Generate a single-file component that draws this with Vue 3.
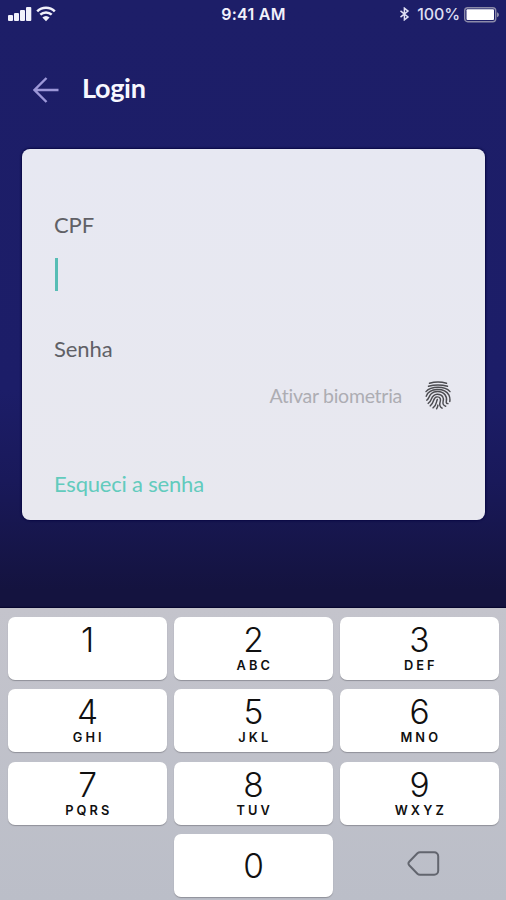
<script setup>
const keys = [
  { digit: '1', letters: '' },
  { digit: '2', letters: 'ABC' },
  { digit: '3', letters: 'DEF' },
  { digit: '4', letters: 'GHI' },
  { digit: '5', letters: 'JKL' },
  { digit: '6', letters: 'MNO' },
  { digit: '7', letters: 'PQRS' },
  { digit: '8', letters: 'TUV' },
  { digit: '9', letters: 'WXYZ' },
]
</script>

<template>
  <div class="screen">
    <header class="status">
      <div class="status-left">
        <svg class="signal" width="24" height="16" viewBox="0 0 24 16">
          <rect x="0" y="9" width="5" height="6" rx="1" />
          <rect x="6" y="7" width="5" height="8" rx="1" />
          <rect x="12" y="4" width="5" height="11" rx="1" />
          <rect x="18" y="1" width="5.3" height="14" rx="1" />
        </svg>
        <svg class="wifi" width="20" height="16" viewBox="0 0 20 16">
          <path d="M1.2 5.3a12.4 12.4 0 0 1 17.6 0" />
          <path d="M4.3 8.7a8.2 8.2 0 0 1 11.4 0" />
          <path class="dot" d="M10 15.2 6.4 11.6a5 5 0 0 1 7.2 0z" />
        </svg>
      </div>
      <span class="time">9:41 AM</span>
      <div class="status-right">
        <svg class="bluetooth" width="11" height="14" viewBox="0 0 11 14">
          <path d="M1.5 3.8 9 9.9 5.4 12.8V1.2L9 4.1 1.5 10.2" />
        </svg>
        <span class="percent">100%</span>
        <svg class="battery" width="36" height="17" viewBox="0 0 36 17">
          <rect class="shell" x=".7" y="1.7" width="31" height="14" rx="3" />
          <rect class="charge" x="2.5" y="3.3" width="27.5" height="10.8" rx="1" />
          <path class="cap" d="M33 6.2c2.6.7 2.6 4.3 0 5z" />
        </svg>
      </div>
    </header>

    <nav class="topbar">
      <svg class="back" width="26" height="28" viewBox="0 0 26 28">
        <path d="M25.5 14H1.5M13.5 2 1.5 14l12 12" />
      </svg>
      <h1>Login</h1>
    </nav>

    <main class="card">
      <label class="label">CPF</label>
      <div class="field"><span class="caret"></span></div>
      <label class="label">Senha</label>
      <div class="biometrics">
        <span>Ativar biometria</span>
        <svg width="26" height="30" viewBox="0 0 26 30">
          <path d="M4.500 3.200Q13 .6 21.500 3.200" />
          <path d="M3.500 6.200Q13 3.600 22.500 6.200" />
          <path d="M1 11.600C6 5.800 20 5.800 25 11.600" />
          <path d="M1.200 16.200C4.500 7.600 19.500 7.500 24 15.200c.9 2 1.100 4.300.8 6.300" />
          <path d="M1.800 20.200C5 18.500 3.500 11.800 12.600 11.500c7-.1 9.900 5.500 8.700 10-.4 1.600.5 2 1.700 2.100" />
          <path d="M3.200 23.400c4.500-2.300 2-8.900 9-9.200 5.500-.1 7 4 5.900 7.300-.6 2.300.4 4.200 2.600 4.700" />
          <path d="M5.200 25.900c4.400-2.900 2.300-8.600 6.700-9 3.600-.3 4.100 2.600 3.200 5-.9 2.700.2 5.100 2 6.300" />
          <path d="M8 27.800c4-2.800 2.800-5.600 4.400-8.400M11.600 28.700c.8-1 1.200-2.200 1.300-3.600" />
        </svg>
      </div>
      <a class="forgot">Esqueci a senha</a>
    </main>

    <section class="keyboard">
      <button v-for="key in keys" :key="key.digit" class="key">
        <span class="digit">{{ key.digit }}</span>
        <span v-if="key.letters" class="letters">{{ key.letters }}</span>
      </button>
      <span></span>
      <button class="key zero"><span class="digit">0</span></button>
      <button class="delete">
        <svg width="34" height="28" viewBox="0 0 34 28">
          <path d="M13 2.2h14.2a4 4 0 0 1 4 4v14.6a4 4 0 0 1-4 4H13a4 4 0 0 1-2.6-1L2.2 15.2a2.3 2.3 0 0 1 0-3.4l8.2-8.6a4 4 0 0 1 2.6-1z" />
        </svg>
      </button>
    </section>
  </div>
</template>

<style>
body {
  margin: 0;
}
</style>

<style scoped>
.screen {
  box-sizing: border-box;
  display: flex;
  flex-direction: column;
  width: 506px;
  height: 900px;
  overflow: hidden;
  background: linear-gradient(#1d1e68 0, #1c1d68 390px, #19195a 480px, #14133f 590px, #14133f 608px);
  font-family: Lato, sans-serif;
}

.status {
  display: grid;
  grid-template-columns: 1fr auto 1fr;
  align-items: center;
  height: 28px;
  padding: 0 6px 0 8px;
  color: #f1f1fb;
  font-family: Inter, sans-serif;
  flex: none;
}

.status-left,
.status-right {
  display: flex;
  align-items: center;
}

.status-right {
  justify-content: flex-end;
}

.signal {
  fill: #f1f1fb;
}

.wifi {
  margin: 0 0 0 4px;
  fill: none;
  stroke: #f1f1fb;
  stroke-width: 2.5;
}

.wifi .dot {
  fill: #f1f1fb;
  stroke: none;
}

.time {
  margin-right: 1px;
  font-size: 16px;
  font-weight: 600;
  letter-spacing: 0.25px;
}

.bluetooth {
  margin-right: 7px;
  fill: none;
  stroke: #e0e0f4;
  stroke-width: 1.5;
}

.percent {
  margin-right: 4px;
  color: #dedef2;
  font-size: 16px;
  font-weight: 500;
  letter-spacing: -0.1px;
}

.shell {
  fill: none;
  stroke: #8c8ba9;
  stroke-width: 1.4;
}

.charge {
  fill: #fff;
}

.cap {
  fill: #8c8ba9;
}

.topbar {
  display: flex;
  align-items: center;
  gap: 23px;
  height: 121px;
  padding-left: 33px;
  flex: none;
}

.back {
  margin-top: 3px;
  fill: none;
  stroke: #9c97d8;
  stroke-width: 2.4;
}

h1 {
  margin: -2px 0 0;
  color: #f8f8ff;
  font-size: 27px;
  font-weight: 700;
  letter-spacing: -0.3px;
  line-height: 32px;
}

.card {
  box-sizing: border-box;
  display: flex;
  flex-direction: column;
  width: 463px;
  height: 371px;
  margin-left: 22px;
  padding: 61px 32px 0;
  border-radius: 8px;
  background: linear-gradient(#e7e8f2, #e8e8ef);
  box-shadow: 0 0 2px 1px #090843;
  flex: none;
}

.label {
  height: 30px;
  color: #606066;
  font-size: 22px;
  letter-spacing: -0.1px;
  line-height: 30px;
}

.field {
  height: 75px;
  margin-bottom: 1px;
  padding: 18px 0 0 1px;
}

.caret {
  display: block;
  width: 3px;
  height: 33px;
  background: #57bdb5;
}

.biometrics {
  display: flex;
  align-items: center;
  justify-content: flex-end;
  gap: 23px;
  height: 32px;
  margin-top: 15px;
  padding-right: 2px;
  color: #adadb3;
  font-size: 19.5px;
  font-variant-ligatures: none;
  letter-spacing: -0.27px;
}

.biometrics svg {
  margin-top: -1px;
  fill: none;
  stroke: #4c4c51;
  stroke-width: 1.45;
  stroke-linecap: round;
}

.forgot {
  margin-top: 58px;
  color: #62cbbd;
  font-size: 22px;
  letter-spacing: -0.2px;
  line-height: 30px;
}

.keyboard {
  box-sizing: border-box;
  display: grid;
  grid-template-columns: repeat(3, 159px);
  grid-auto-rows: 63px;
  column-gap: 7px;
  row-gap: 9.3px;
  height: 292px;
  margin-top: 88px;
  padding: 9px 0 0 8px;
  background: linear-gradient(#c4c4cc, #bbbec8);
  box-shadow: 0 -1px 1px #07062e;
  flex: none;
}

button {
  margin: 0;
  padding: 0;
  border: 0;
  background: none;
}

.key {
  display: flex;
  flex-direction: column;
  align-items: center;
  padding-top: 4px;
  border-radius: 7px;
  background: #fff;
  box-shadow: 0 1px 1px #909199;
  color: #101010;
  font-family: Inter, sans-serif;
}

.digit {
  font-size: 33.5px;
  font-weight: 300;
  line-height: 38px;
}

.letters {
  margin-right: -2.6px;
  font-size: 12.8px;
  font-weight: 600;
  letter-spacing: 3.1px;
  line-height: 14px;
}

.zero {
  padding-top: 2px;
  justify-content: center;
}

.delete {
  display: flex;
  align-items: center;
  justify-content: center;
}

.delete svg {
  margin: -3px 0 0 8px;
  fill: none;
  stroke: #62656e;
  stroke-width: 2;
}
</style>
